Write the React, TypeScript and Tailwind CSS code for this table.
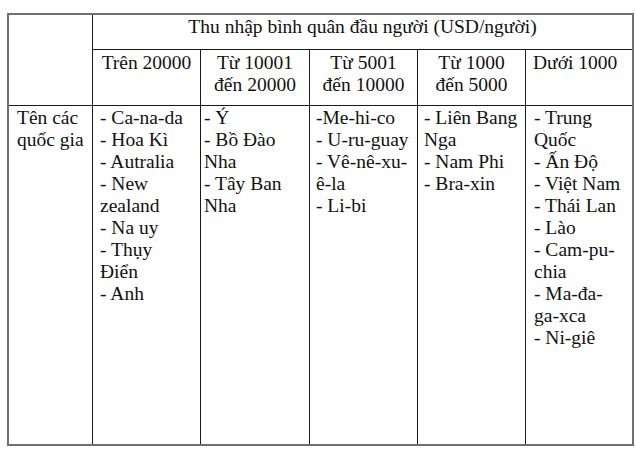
const INCOME_GROUPS = [
  { key: "g1", label: ["Trên 20000"], align: "center" },
  { key: "g2", label: ["Từ 10001", "đến 20000"], align: "center" },
  { key: "g3", label: ["Từ 5001", "đến 10000"], align: "center" },
  { key: "g4", label: ["Từ 1000", "đến 5000"], align: "center" },
  { key: "g5", label: ["Dưới 1000"], align: "left" },
];

// each entry is one printed line, wrapped the way the source document wraps it
const COUNTRY_COLUMNS = [
  {
    key: "g1",
    pad: "pl-[7px]",
    lines: ["- Ca-na-da", "- Hoa Kì", "- Autralia", "- New", "zealand", "- Na uy", "- Thụy", "Điển", "- Anh"],
  },
  { key: "g2", pad: "pl-[3px]", lines: ["- Ý", "- Bồ Đào", "Nha", "- Tây Ban", "Nha"] },
  { key: "g3", pad: "pl-[6px]", lines: ["-Me-hi-co", "- U-ru-guay", "- Vê-nê-xu-", "ê-la", "- Li-bi"] },
  { key: "g4", pad: "pl-[6px]", lines: ["- Liên Bang", "Nga", "- Nam Phi", "- Bra-xin"] },
  {
    key: "g5",
    pad: "pl-[8px]",
    lines: [
      "- Trung",
      "Quốc",
      "- Ấn Độ",
      "- Việt Nam",
      "- Thái Lan",
      "- Lào",
      "- Cam-pu-",
      "chia",
      "- Ma-đa-",
      "ga-xca",
      "- Ni-giê",
    ],
  },
];

function Lines({ lines }: { lines: string[] }) {
  return (
    <>
      {lines.map((line, i) => (
        <div key={i} className="whitespace-nowrap">
          {line}
        </div>
      ))}
    </>
  );
}

export default function App() {
  return (
    <div className="min-h-[460px] w-[636px] bg-white pl-[7px] pt-[13px]">
      <div
        className="grid w-[627px] grid-cols-[83px_108px_109px_108px_108px_107px] grid-rows-[34px_56px_339px] border-2 border-[#707070] text-[19.5px] leading-[22px] text-[#111]"
        style={{ fontFamily: '"Liberation Serif", "Times New Roman", serif' }}
      >
        {/* Empty corner */}
        <div className="row-span-2" />

        {/* Main header */}
        <div className="col-span-5 border-l border-[#1a1a1a] pt-[1px] text-center whitespace-nowrap">
          Thu nhập bình quân đầu người (USD/người)
        </div>

        {/* Income groups */}
        {INCOME_GROUPS.map((group) => (
          <div
            key={group.key}
            className={
              group.align === "center"
                ? "border-l border-t border-[#1a1a1a] pt-[2px] text-center"
                : "border-l border-t border-[#1a1a1a] pl-[7px] pt-[2px] text-left"
            }
          >
            <Lines lines={group.label} />
          </div>
        ))}

        {/* Countries row */}
        <div className="border-t border-[#1a1a1a] pl-[8px] pt-[1px]">
          <Lines lines={["Tên các", "quốc gia"]} />
        </div>
        {COUNTRY_COLUMNS.map((col) => (
          <div key={col.key} className={`border-l border-t border-[#1a1a1a] pt-[1px] ${col.pad}`}>
            <Lines lines={col.lines} />
          </div>
        ))}
      </div>
    </div>
  );
}
